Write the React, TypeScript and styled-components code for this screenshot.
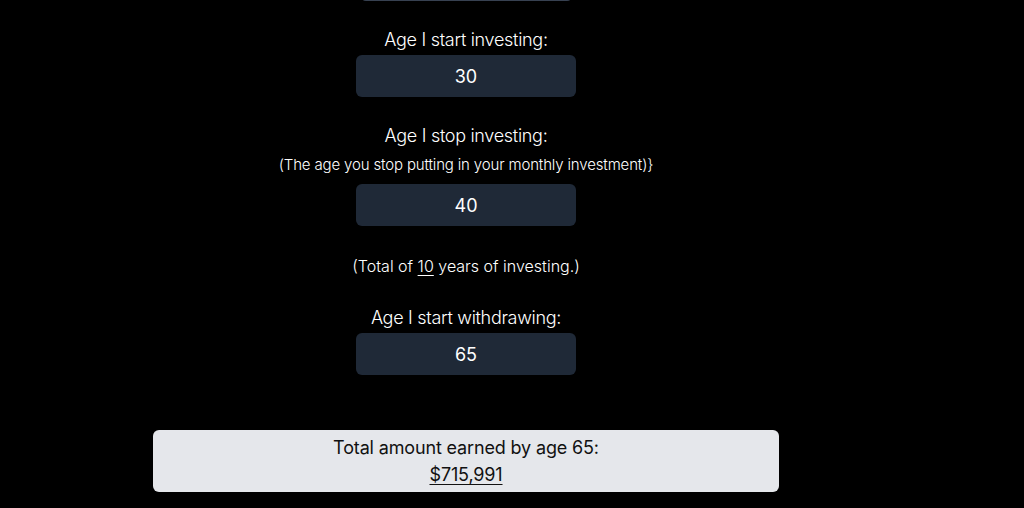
import React from "react";
import styled, { createGlobalStyle } from "styled-components";

const Global = createGlobalStyle`
  html, body { margin: 0; padding: 0; background: #000; }
  body { font-family: Inter, "Noto Sans", sans-serif; color: #fff; overflow: hidden; }
  * { box-sizing: border-box; }
`;

const Page = styled.div`
  width: 932px;
  height: 508px;
  display: flex;
  flex-direction: column;
  align-items: center;
  overflow: hidden;
`;

const Field = styled.div<{ $gap?: number }>`
  display: flex;
  flex-direction: column;
  align-items: center;
  margin-top: ${(p) => p.$gap ?? 24}px;
`;

const Label = styled.div`
  font-size: 18px;
  line-height: 28px;
  font-weight: 300;
  letter-spacing: -0.3px;
  margin-top: 1px;
  margin-bottom: 1px;
`;

const Hint = styled.div`
  font-size: 15px;
  line-height: 20px;
  font-weight: 300;
  letter-spacing: -0.15px;
  margin-top: 4px;
  margin-bottom: 9px;
`;

const Input = styled.div<{ $w?: number }>`
  width: ${(p) => p.$w ?? 220}px;
  height: 42px;
  border-radius: 6px;
  background: #1f2937;
  color: #fff;
  font-size: 18px;
  font-weight: 400;
  display: flex;
  align-items: center;
  justify-content: center;
`;

const TopStub = styled(Input)`
  margin-top: -41px;
  border-bottom: 1px solid #374151;
`;

const Note = styled.div`
  font-size: 16px;
  line-height: 24px;
  font-weight: 300;
  margin-top: 28px;
  u { text-underline-offset: 3px; }
`;

const Result = styled.div`
  margin-top: 55px;
  width: 626px;
  padding: 4px 0;
  border-radius: 6px;
  background: #e5e7eb;
  color: #111;
  text-align: center;
  font-size: 18px;
  line-height: 27px;
  font-weight: 400;
  letter-spacing: -0.15px;
`;

const Amount = styled.div`
  text-decoration: underline;
  text-underline-offset: 3px;
`;

export default function App() {
  return (
    <>
      <Global />
      <Page>
        <TopStub $w={213} />
        <Field>
          <Label>Age I start investing:</Label>
          <Input>30</Input>
        </Field>
        <Field>
          <Label>Age I stop investing:</Label>
          <Hint>(The age you stop putting in your monthly investment)&#125;</Hint>
          <Input>40</Input>
        </Field>
        <Note>
          (Total of <u>10</u> years of investing.)
        </Note>
        <Field $gap={25}>
          <Label>Age I start withdrawing:</Label>
          <Input>65</Input>
        </Field>
        <Result>
          <div>Total amount earned by age 65:</div>
          <Amount>$715,991</Amount>
        </Result>
      </Page>
    </>
  );
}
